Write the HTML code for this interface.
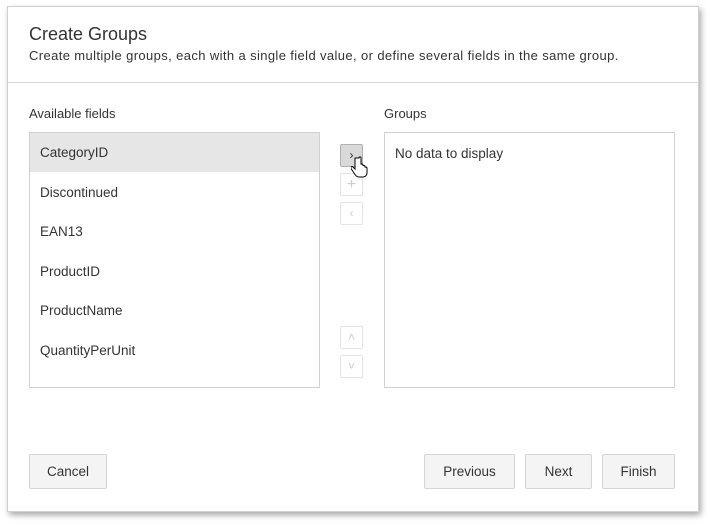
<!DOCTYPE html>
<html><head><meta charset="utf-8"><style>
body{margin:0;width:710px;height:525px;background:#fff;font-family:"Liberation Sans",sans-serif;color:#333;position:relative;overflow:hidden}
.dlg{position:absolute;left:7px;top:6px;width:690px;height:504px;background:#fff;border:1px solid #d0d0d0;box-shadow:2px 3px 6px rgba(0,0,0,.35)}
.abs{position:absolute}
.t{font-size:18px;color:#333;left:21px;top:17px}
.st{font-size:13px;left:21px;top:41px;letter-spacing:0.38px}
.hr{left:0;top:75px;width:690px;height:1px;background:#d8d8d8}
.lbl{font-size:13px}
.box{border:1px solid #d0d0d0;background:#fff}
.row{position:absolute;left:0;width:289px;height:39px;line-height:39px;padding-left:10px;font-size:13.5px;box-sizing:border-box}
.sb{position:absolute;width:23px;height:23px;border:1px solid #e4e4e4;border-radius:2px;box-sizing:border-box;background:#fff;color:#ccc;font-size:12px;text-align:center;line-height:21px}
.btn{position:absolute;top:447px;height:35px;border:1px solid #d4d4d4;border-radius:2px;background:#f4f4f4;box-sizing:border-box;font-size:13.5px;text-align:center;line-height:33px;color:#333}
</style></head><body>
<div class="dlg">
<div class="abs t">Create Groups</div>
<div class="abs st">Create multiple groups, each with a single field value, or define several fields in the same group.</div>
<div class="abs hr"></div>
<div class="abs lbl" style="left:21px;top:99px">Available fields</div>
<div class="abs lbl" style="left:376px;top:99px">Groups</div>
<div class="abs box" style="left:21px;top:125px;width:289px;height:254px">
<div class="row" style="top:0;background:#e6e6e6">CategoryID</div>
<div class="row" style="top:40px">Discontinued</div>
<div class="row" style="top:79px">EAN13</div>
<div class="row" style="top:119px">ProductID</div>
<div class="row" style="top:158px">ProductName</div>
<div class="row" style="top:198px">QuantityPerUnit</div>
</div>
<div class="abs box" style="left:376px;top:125px;width:289px;height:254px">
<div style="position:absolute;left:10px;top:13px;font-size:13.5px">No data to display</div>
</div>
<div class="sb" style="left:332px;top:137px;background:#d9d9d9;border-color:#b0b0b0;color:#333">&#8250;</div>
<div class="sb" style="left:332px;top:166px;font-size:16px">+</div>
<div class="sb" style="left:332px;top:195px">&#8249;</div>
<div class="sb" style="left:332px;top:319px">&#708;</div>
<div class="sb" style="left:332px;top:348px">&#709;</div>
<svg class="abs" style="left:343px;top:149px" width="18" height="24" viewBox="0 0 18 24"><path d="M4 2v11l-2-2c-1-1-3 0-2 1.5l4 6c1 1.5 2 2.5 4 2.5h4c2.5 0 4-2 4-4v-5c0-1-1.5-1.5-2-.5v-1c0-1-1.5-1.5-2-.5v-1c0-1-1.5-1.5-2-.5V2c0-1.5-2-1.5-2 0z" fill="#fff" stroke="#000" stroke-width="1"/></svg>
<div class="btn" style="left:21px;width:78px">Cancel</div>
<div class="btn" style="left:416px;width:91px">Previous</div>
<div class="btn" style="left:517px;width:67px">Next</div>
<div class="btn" style="left:594px;width:73px">Finish</div>
</div>
</body></html>
